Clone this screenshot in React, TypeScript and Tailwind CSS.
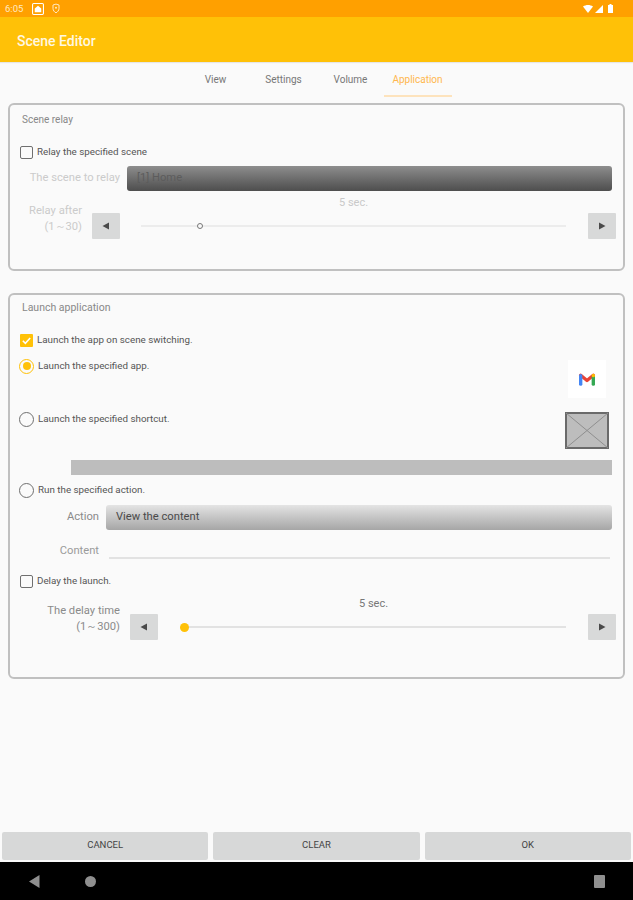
import React from "react";

function Check({ checked }: { checked?: boolean }) {
  return checked ? (
    <span className="flex h-[13px] w-[13px] shrink-0 items-center justify-center rounded-[1px] bg-[#ffc107]">
      <svg width="11" height="11" viewBox="0 0 24 24" fill="none" stroke="#fff" strokeWidth="3.5">
        <path d="M4 12.5l5.5 5.5L20 6.5" />
      </svg>
    </span>
  ) : (
    <span className="h-[13px] w-[13px] shrink-0 rounded-[2px] border-[1.5px] border-[#6f6f6f]" />
  );
}

function Radio({ checked }: { checked?: boolean }) {
  return checked ? (
    <span className="-ml-[1px] flex h-[15px] w-[15px] shrink-0 items-center justify-center rounded-full border-[1.5px] border-[#ffc107]">
      <span className="h-[8px] w-[8px] rounded-full bg-[#ffc107]" />
    </span>
  ) : (
    <span className="-ml-[1px] h-[15px] w-[15px] shrink-0 rounded-full border-[1.5px] border-[#6f6f6f]" />
  );
}

function StepButton({ dir, className = "" }: { dir: "l" | "r"; className?: string }) {
  return (
    <span className={`flex h-[26px] w-[28px] shrink-0 items-center justify-center rounded-[1px] bg-[#d8d9d9] ${className}`}>
      <svg width="8" height="8" viewBox="0 0 8 8" fill="#4a4a4a">
        {dir === "l" ? <path d="M7 0.5v7L0.5 4z" /> : <path d="M1 0.5v7L7.5 4z" />}
      </svg>
    </span>
  );
}

function App() {
  return (
    <div className="flex h-[900px] w-full flex-col overflow-hidden bg-[#fafafa] font-['Roboto',sans-serif] text-[#555]">
      {/* status bar */}
      <div className="flex h-[17px] shrink-0 items-center bg-[#ffa000] pl-[5px] pr-[20px] text-white">
        <span className="w-[20px] text-[9.5px] leading-none text-[#ffe9c4]">6:05</span>
        <svg className="ml-[7px]" width="12" height="12" viewBox="0 0 11 11">
          <rect x="0.5" y="0.5" width="10" height="10" rx="1" fill="none" stroke="#fff" />
          <path d="M2.5 8.5V5L5.5 2.5 8.5 5v3.5z" fill="#fff" />
        </svg>
        <svg className="ml-[8px]" width="8" height="11" viewBox="0 0 8 10">
          <path d="M1 1.5L4 .6l3 .9v3.5C7 7 5.5 8.6 4 9.3 2.5 8.6 1 7 1 5z" fill="none" stroke="#ffe9c4" />
          <circle cx="4" cy="4.2" r="1" fill="#ffe9c4" />
        </svg>
        <span className="flex-1" />
        <svg width="10" height="8" viewBox="0 0 10 8">
          <path d="M0 1.5C3 -.5 7 -.5 10 1.5L5 8z" fill="#fff" />
        </svg>
        <svg className="ml-[2px]" width="8" height="8" viewBox="0 0 8 8">
          <path d="M0 8L8 0v8z" fill="#fff" />
        </svg>
        <svg className="ml-[5px]" width="5" height="9" viewBox="0 0 5 9">
          <path d="M1.5 0h2v1H5v8H0V1h1.5z" fill="#fff" />
        </svg>
      </div>

      {/* toolbar */}
      <div className="flex h-[45px] shrink-0 items-center bg-[#ffc107] pl-[17px] pt-[3px] shadow-[0_1px_1px_rgba(0,0,0,0.08)]">
        <span className="text-[14px] font-medium text-[#fff8e1]">Scene Editor</span>
      </div>

      {/* tabs */}
      <div className="flex h-[35px] shrink-0 justify-center pr-[2px]">
        <div className="flex w-[68px] items-center justify-center pl-[4px] text-[10px] text-[#777]">View</div>
        <div className="flex w-[68px] items-center justify-center pl-[4px] text-[10px] text-[#777]">Settings</div>
        <div className="flex w-[68px] items-center justify-center pl-[2px] text-[10px] text-[#777]">Volume</div>
        <div className="flex w-[68px] items-center justify-center border-b-2 border-[#fde3bd] pt-[1px] text-[10px] text-[#ffb74d]">Application</div>
      </div>

      <div className="flex flex-1 flex-col gap-[22px] px-[8px] pt-[6px]">
        {/* scene relay */}
        <section className="h-[168px] rounded-[6px] border-2 border-[#c0c0c0] pl-[10px] pr-[7px]">
          <div className="flex h-[28px] items-center pl-[2px] pt-[1px] text-[10px] text-[#888]">Scene relay</div>
          <div className="mt-[9px] flex h-[20px] items-center gap-[4px] text-[9.8px]">
            <Check />
            <span>Relay the specified scene</span>
          </div>
          <div className="mt-[4px] flex h-[25px] items-center pr-[4px]">
            <span className="w-[100px] shrink-0 text-right text-[11.2px] text-[#cbcbcb]">The scene to relay</span>
            <div className="ml-[7px] flex h-[25px] flex-1 items-center rounded-[3px] bg-gradient-to-b from-[#8e8e8e] to-[#4e4e4e] pl-[10px] text-[11.2px] text-[#5c5c5c]">
              [1] Home
            </div>
          </div>
          <div className="mt-[6px] pl-[319px] text-[11px] leading-[12px] text-[#c9c9c9]">5 sec.</div>
          <div className="mt-[4px] flex h-[26px] items-start">
            <span className="-mt-[10px] w-[62px] shrink-0 text-right text-[11.2px] leading-[16px] text-[#cbcbcb]">
              Relay after
              <br />
              (1～30)
            </span>
            <StepButton dir="l" className="ml-[10px]" />
            <div className="relative ml-[21px] mt-[12px] h-[2px] w-[426px] bg-[#ececec]">
              <span className="absolute left-[56px] top-[-2px] h-[6px] w-[6px] rounded-full border border-[#777] bg-[#fafafa]" />
            </div>
            <StepButton dir="r" className="ml-[22px]" />
          </div>
        </section>

        {/* launch application */}
        <section className="h-[386px] rounded-[6px] border-2 border-[#c0c0c0] pl-[10px] pr-[7px]">
          <div className="flex h-[26px] items-center pl-[2px] text-[10.5px] text-[#888]">Launch application</div>
          <div className="mt-[9px] flex h-[20px] items-center gap-[4px] text-[9.8px]">
            <Check checked />
            <span>Launch the app on scene switching.</span>
          </div>

          <div className="mt-[6px] flex h-[53px] items-start">
            <div className="flex h-[20px] flex-1 items-center gap-[4px] text-[9.8px]">
              <Radio checked />
              <span>Launch the specified app.</span>
            </div>
            <div className="mr-[10px] mt-[4px] flex h-[38px] w-[38px] items-center justify-center bg-white">
              <svg width="18" height="13" viewBox="0 0 18 14" fill="none" strokeWidth="3.6" strokeLinecap="round" strokeLinejoin="round">
                <path d="M2.2 2.5L9 8l6.8-5.5" stroke="#ea4335" />
                <path d="M2.2 12V3" stroke="#4285f4" />
                <path d="M15.8 12V4" stroke="#34a853" />
                <path d="M15.8 2.5v.4" stroke="#fbbc04" />
              </svg>
            </div>
          </div>

          <div className="flex h-[51px] items-start">
            <div className="flex h-[20px] flex-1 items-center gap-[4px] text-[9.8px]">
              <Radio />
              <span>Launch the specified shortcut.</span>
            </div>
            <svg className="mr-[7px] mt-[3px]" width="44" height="37" viewBox="0 0 44 37">
              <rect x="1" y="1" width="42" height="35" fill="#bdbdbd" stroke="#6a6a6a" strokeWidth="2" />
              <path d="M1 1l42 35M43 1L1 36" stroke="#8f8f8f" strokeWidth="1" />
            </svg>
          </div>

          <div className="ml-[51px] mr-[4px] h-[15px] bg-[#bdbdbd]" />

          <div className="mt-[5px] flex h-[20px] items-center gap-[4px] text-[9.8px]">
            <Radio />
            <span>Run the specified action.</span>
          </div>

          <div className="mt-[5px] flex h-[25px] items-center pr-[4px]">
            <span className="w-[79px] shrink-0 text-right text-[11.2px] text-[#8a8a8a]">Action</span>
            <div className="ml-[7px] flex h-[25px] flex-1 items-center rounded-[3px] bg-gradient-to-b from-[#e4e4e4] to-[#a6a6a6] pl-[10px] text-[11.2px] text-[#4a4a4a]">
              View the content
            </div>
          </div>

          <div className="mt-[8px] flex h-[24px] items-center pr-[6px]">
            <span className="w-[79px] shrink-0 pt-[2px] text-right text-[11.2px] text-[#9a9a9a]">Content</span>
            <div className="ml-[10px] mt-[7px] h-[11px] flex-1 border-b-2 border-[#e2e2e2]" />
          </div>

          <div className="mt-[9px] flex h-[20px] items-center gap-[4px] text-[9.8px]">
            <Check />
            <span>Delay the launch.</span>
          </div>

          <div className="mt-[7px] pl-[339px] text-[11px] leading-[12px] text-[#777]">5 sec.</div>

          <div className="mt-[4px] flex h-[26px] items-start">
            <span className="-mt-[11px] w-[100px] shrink-0 text-right text-[11.2px] leading-[16px] text-[#8a8a8a]">
              The delay time
              <br />
              (1～300)
            </span>
            <StepButton dir="l" className="ml-[10px]" />
            <div className="relative ml-[26px] mt-[12px] h-[2px] w-[383px] bg-[#e2e2e2]">
              <span className="absolute left-[-4px] top-[-3px] h-[9px] w-[9px] rounded-full bg-[#ffc107]" />
            </div>
            <StepButton dir="r" className="ml-[22px]" />
          </div>
        </section>
      </div>

      {/* bottom buttons */}
      <div className="flex h-[30px] shrink-0 gap-[5px] px-[2px] pb-[2px]">
        <div className="flex flex-1 items-center justify-center rounded-[2px] bg-[#d7d8d8] pb-[1px] text-[9.5px] text-[#444]">CANCEL</div>
        <div className="flex flex-1 items-center justify-center rounded-[2px] bg-[#d7d8d8] pb-[1px] text-[9.5px] text-[#444]">CLEAR</div>
        <div className="flex flex-1 items-center justify-center rounded-[2px] bg-[#d7d8d8] pb-[1px] text-[9.5px] text-[#444]">OK</div>
      </div>

      {/* nav bar */}
      <div className="flex h-[38px] shrink-0 items-center justify-between bg-black pl-[29px] pr-[28px]">
        <div className="flex items-center gap-[45px]">
          <svg width="11" height="13" viewBox="0 0 11 13"><path d="M10.5 0v13L0 6.5z" fill="#8f8f8f" /></svg>
          <span className="h-[11px] w-[11px] rounded-full bg-[#8f8f8f]" />
        </div>
        <span className="h-[13px] w-[11px] rounded-[1px] bg-[#8f8f8f]" />
      </div>
    </div>
  );
}

export default App;
